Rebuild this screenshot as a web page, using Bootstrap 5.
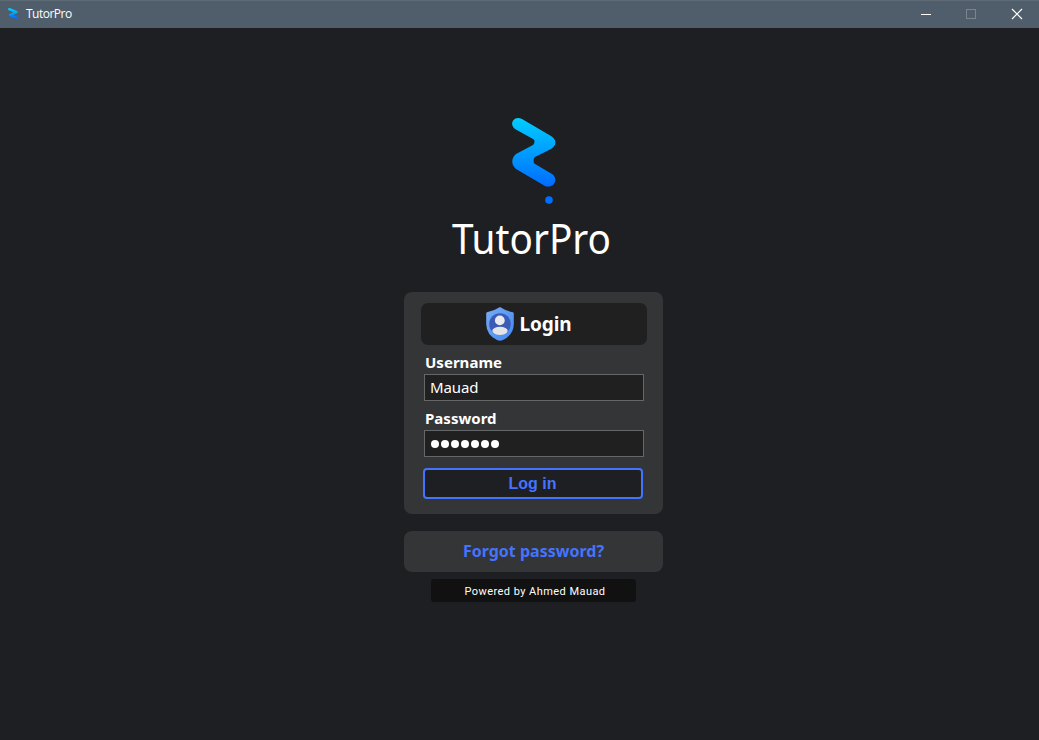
<!DOCTYPE html>
<html lang="en">
<head>
<meta charset="utf-8">
<meta name="viewport" content="width=device-width, initial-scale=1">
<title>TutorPro</title>
<link href="https://cdn.jsdelivr.net/npm/bootstrap@5.3.0/dist/css/bootstrap.min.css" rel="stylesheet">
<style>
  body { background: #1e1f23; font-family: "Noto Sans", "Open Sans", sans-serif; color: #fff; }
  .titlebar { height: 28px; background: #505d6a; border-top: 1px solid #5d6975; font-size: 12px; }
  .titlebar .app-name { font-family: "Open Sans", sans-serif; letter-spacing: -.5px; line-height: 25px; height: 27px; }
  .titlebar svg { display: block; }
  .login-column { width: 259px; margin-left: 404px; }
  .brand { padding-top: 84px; height: 264px; }
  .brand svg { display: block; }
  .wordmark { font-family: "Noto Sans", sans-serif; font-size: 42px; }
  .panel { background: #343537; border-radius: 8px; }
  .login-panel { height: 222px; padding: 11px 16px 0 17px; }
  .panel-title { height: 42px; background: #202020; border-radius: 7px; font-size: 19px; font-weight: 700; gap: 5px; line-height: 42px; padding-right: 10px; letter-spacing: -.1px; }
  .field-label { font-size: 15px; font-weight: 700; line-height: 20px; height: 20px; margin: 7px 0 2px 4px; display: block; letter-spacing: .02px; }
  .field.form-control { width: 220px; height: 27px; margin-left: 3px; padding: 0 5px; border: 1px solid #666769; border-radius: 0; background: #202020; color: #fff; font-size: 15px; line-height: 25px; letter-spacing: -.1px; }
  .dots.form-control { gap: 2px; padding-left: 6px; }
  .dots i { width: 8px; height: 8px; border-radius: 50%; background: #fff; }
  .login-btn.btn { width: 220px; height: 31px; margin: 11px 0 0 2px; padding: 0 1px 0 0; border: 2px solid #4474ff; border-radius: 4px; background: #1e1f23; color: #4474ff; font-family: "Liberation Sans", sans-serif; font-size: 16px; font-weight: 700; line-height: 26px; }
  .forgot { height: 41px; margin-top: 17px; color: #4474ff; font-size: 16px; font-weight: 700; line-height: 40px; letter-spacing: 0; }
  .powered { width: 205px; height: 23px; margin: 7px 0 0 27px; padding-left: 3px; background: #111; border-radius: 3px; font-family: Roboto, sans-serif; font-size: 11px; letter-spacing: .45px; line-height: 25px; }
</style>
</head>
<body class="vh-100 overflow-hidden">
<header class="titlebar d-flex align-items-center">
  <svg width="26" height="27" viewBox="0 0 26 27"><path d="M9.2 8.2L16.5 11.2L10 14.1L17 17.2" fill="none" stroke="url(#brandBlue)" stroke-width="2.4" stroke-linecap="round" stroke-linejoin="round"/></svg>
  <span class="app-name">TutorPro</span>
  <svg class="ms-auto" width="137" height="27" viewBox="0 0 137 27" fill="none">
    <path d="M19 13.5H29" stroke="#fff"/>
    <rect x="64.5" y="8.5" width="9" height="9" stroke="#7b858f"/>
    <path d="M110 8L120 18M120 8L110 18" stroke="#fff" stroke-width="1.2"/>
  </svg>
</header>
<main class="login-column">
  <div class="brand">
    <svg width="259" height="180" viewBox="404 112 259 180">
      <defs><linearGradient id="brandBlue" x1="0" y1="0" x2="0" y2="1"><stop offset="0" stop-color="#00ceff"/><stop offset="1" stop-color="#006cff"/></linearGradient></defs>
      <path d="M522 119L551 136C557 140 557 145 551 149L535 157C533 159 533 163 535 164L552 174C559 179 554 189 545 186L516 169C511 165 511 158 516 154L533 145C535 143 535 140 533 139L515 129C508 123 515 115 522 119Z" fill="url(#brandBlue)"/>
      <circle cx="549" cy="200" r="3.8" fill="#006fff"/>
      <text class="wordmark" x="452" y="254" textLength="159" lengthAdjust="spacingAndGlyphs" fill="#fff">TutorPro</text>
    </svg>
  </div>
  <section class="panel login-panel">
    <h1 class="panel-title d-flex align-items-center justify-content-center mb-0">
      <svg width="28" height="36" viewBox="0 0 28 36">
        <defs><linearGradient id="shieldBlue" x1="0" y1="0" x2="1" y2="1"><stop stop-color="#79acf5"/><stop offset="1" stop-color="#3f88f4"/></linearGradient></defs>
        <path d="M14 1Q20 5 27 6.2Q27.8 6.5 27.8 7.5V18Q27.5 29 17 34Q14 35.5 11 34Q.5 29 .2 18V7.5Q.2 6.5 1 6.2Q8 5 14 1Z" fill="url(#shieldBlue)"/>
        <circle cx="14" cy="18" r="10.8" fill="#3b5bb7"/>
        <circle cx="13.8" cy="14.4" r="4.9" fill="#e8eaee"/>
        <ellipse cx="14" cy="24.8" rx="7.7" ry="4.1" fill="#e2e4e8"/>
      </svg>
      <span>Login</span>
    </h1>
    <label class="field-label">Username</label>
    <div class="field form-control">Mauad</div>
    <label class="field-label">Password</label>
    <div class="field form-control dots d-flex align-items-center"><i></i><i></i><i></i><i></i><i></i><i></i><i></i></div>
    <button class="login-btn btn d-block" type="button">Log in</button>
  </section>
  <div class="panel forgot text-center">Forgot password?</div>
  <div class="powered text-center">Powered by Ahmed Mauad</div>
</main>
<script src="https://cdn.jsdelivr.net/npm/bootstrap@5.3.0/dist/js/bootstrap.bundle.min.js"></script>
</body>
</html>
